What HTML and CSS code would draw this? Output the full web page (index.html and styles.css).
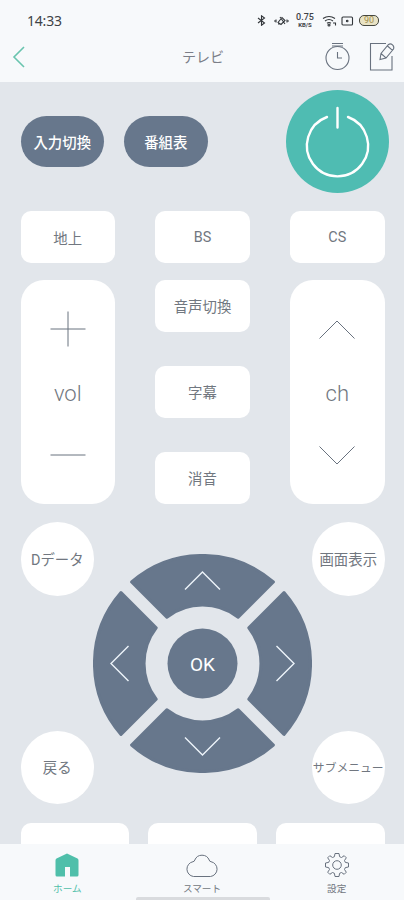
FILE: index.html
```html
<!DOCTYPE html>
<html lang="ja">
	<head>
		<title>テレビ</title><meta charset="utf-8">
		<link rel="stylesheet" href="styles.css">
	</head>
	<body>
		<div class="status">
			<span class="hora">14:33</span>
			<svg class="bt" width="9" height="11" viewBox="0 0 9 11"><path d="M1 3l6.5 5-3 2.3V.8l3 2.2L1 8"/></svg>
			<svg class="vibra" width="17" height="12" viewBox="0 0 17 12"><path d="M1 6h2M14 6h2M3 4.500v3M14 4.500v3M5 7.500l4-5 3 3-4 4zM7 2l5 7M5 9h3"/></svg>
			<span class="red"><b>0.75</b><small>KB/S</small></span>
			<svg class="wifi" width="15" height="12" viewBox="0 0 15 12"><path d="M1 3.500q6-4 12 0M3 6q4-3 8 0M5 8.300q2-1.500 4 0"/><circle cx="7" cy="10" r="1"/><path d="M11 8h2.500v2.500"/></svg>
			<svg class="caja" width="13" height="10" viewBox="0 0 13 10"><rect x="1" y="1" width="10.500" height="8" rx="1"/><circle cx="6.200" cy="5" r=".8"/></svg>
			<span class="bateria">90</span>
		</div>
		<div class="cabecera">
			<svg class="volver" width="14" height="22" viewBox="0 0 14 22"><path d="M12 1L2 11l10 10"/></svg>
			<h1>テレビ</h1>
			<svg class="reloj" width="26" height="29" viewBox="0 0 26 29"><path d="M8 1.500h11M8 4h11M13.500 10v6h4.500"/><circle cx="13.500" cy="16" r="11.500"/></svg>
			<svg class="nota" width="27" height="29" viewBox="0 0 27 29"><path d="M17 1.500H1.500V28H23V14"/><path d="M11 17.500l1-6 7.500-9q2-1.500 4 .3t1 4.200l-7.500 9zM12 11.500l5 4.300M18.500 4l5 4.300"/></svg>
		</div>
		<div class="mando">
			<div class="arriba">
				<div class="pildora">入力切換</div>
				<div class="pildora">番組表</div>
				<svg class="power" width="103" height="103" viewBox="0 0 103 103"><circle cx="51.500" cy="51.500" r="51.500"/><path d="M41 27a30.600 30.600 0 1 0 21 0M51.500 18v19.500"/></svg>
			</div>
			<div class="fila">
				<div class="tecla">地上</div>
				<div class="tecla">BS</div>
				<div class="tecla">CS</div>
			</div>
			<div class="fila centro">
				<div class="columna">
					<svg width="36" height="36" viewBox="0 0 36 36"><path d="M18 .5v35M.5 18h35"/></svg>
					<span>vol</span>
					<svg width="36" height="36" viewBox="0 0 36 36"><path d="M.5 18h35"/></svg>
				</div>
				<div class="medio">
					<div class="tecla">音声切換</div>
					<div class="tecla">字幕</div>
					<div class="tecla">消音</div>
				</div>
				<div class="columna">
					<svg width="36" height="36" viewBox="0 0 36 36"><path d="M.5 27.500L18 10l17.500 17.500"/></svg>
					<span>ch</span>
					<svg width="36" height="36" viewBox="0 0 36 36"><path d="M.5 9.500L18 27l17.500-17.500"/></svg>
				</div>
			</div>
			<div class="cruceta">
				<div class="lado">
					<div class="redondo">Dデータ</div>
					<div class="redondo">戻る</div>
				</div>
				<svg class="flechas" width="219" height="219" viewBox="-109.500 -109.500 219 219">
					<defs>
						<g id="sector">
							<path class="pieza" d="M-70.900-81.500A108 108 0 0 1 70.900-81.500L35.700-46.300A58.500 58.500 0 0 0-35.700-46.300z"/>
							<path class="punta" d="M-17.500-74L0-91.500 17.500-74"/>
						</g>
					</defs>
					<use href="#sector"/>
					<use href="#sector" transform="rotate(90)"/>
					<use href="#sector" transform="rotate(180)"/>
					<use href="#sector" transform="rotate(270)"/>
					<circle r="35"/>
					<text y="7" text-anchor="middle">OK</text>
				</svg>
				<div class="lado">
					<div class="redondo">画面表示</div>
					<div class="redondo largo">サブメニュー</div>
				</div>
			</div>
			<div class="fila ultima">
				<div class="tarjeta"></div>
				<div class="tarjeta"></div>
				<div class="tarjeta"></div>
			</div>
		</div>
		<div class="menu">
			<div class="opcion activa">
				<svg width="32" height="26" viewBox="0 0 32 26"><path d="M16 1.500l10.500 5q1 .6 1 2V23q0 1.500-1.500 1.500h-7V15h-5v9.500H6q-1.500 0-1.500-1.500V8.500q0-1.400 1-2z"/></svg>
				ホーム
			</div>
			<div class="opcion">
				<svg width="32" height="26" viewBox="0 0 32 26"><path d="M7.500 24.500a7.500 7.500 0 0 1-.5-14.800q1.500-.2 1.800-1.700a7.800 7.800 0 0 1 14.400 0q.3 1.500 1.800 1.700a7.500 7.500 0 0 1-.5 14.800z"/></svg>
				スマート
			</div>
			<div class="opcion">
				<svg width="26" height="26" viewBox="-13 -13 26 26"><path d="M-2-11.500h4l.6 3.200 1.900.8L7.200-9.300 9.300-7.200 7.500-4.500l.8 1.900 3.200.6v4l-3.200.6-.8 1.900 1.800 2.700-2.100 2.100-2.700-1.800-1.900.8L2 11.500h-4l-.6-3.200-1.900-.8-2.700 1.800-2.100-2.100 1.800-2.700-.8-1.900-3.200-.6v-4l3.200-.6.8-1.900-1.800-2.700 2.100-2.100 2.700 1.800 1.900-.8z"/><circle r="4.300"/></svg>
				設定
			</div>
			<div class="barra"></div>
		</div>
	</body>
</html>
```
FILE: styles.css
```css
* {box-sizing: border-box;}
body {margin: 0; width: 404px; height: 900px; overflow: hidden; display: flex; flex-direction: column; background-color: #F7F9FB; color: #717780; font-family: Roboto, "Noto Sans CJK JP", sans-serif; font-size: 14.4px;}
svg {display: block; flex: none; fill: none; stroke: #69727F; stroke-width: 1;}

/* barra de estado */
.status {height: 40px; padding: 1px 25px 0 27px; display: flex; align-items: center; color: #3E4247;}
.status svg {stroke: #33373B; stroke-width: 1.1;}
.hora {font-family: "Noto Sans", sans-serif; font-size: 14px; letter-spacing: -.2px; margin-right: auto;}
.vibra {margin-left: 7px;}
.red {width: 20px; margin: 0 7px 0 5px; display: flex; flex-direction: column; align-items: center;}
.red b {font-size: 9px; font-weight: 500; line-height: 9px;}
.red small {font-size: 6px; font-weight: bold; line-height: 6px;}
.caja {margin: 0 5px 0 4px;}
.bateria {width: 20px; height: 11px; border: 1px solid #45473F; border-radius: 5px; background-color: #E9E3C4; color: #A18F4F; font-size: 9px; line-height: 9px; text-align: center;}

/* cabecera */
.cabecera {height: 42px; padding: 0 8px 9px 12px; display: flex; align-items: center;}
.cabecera h1 {margin: -2px 0 0 156px; font-size: 14px; font-weight: normal; color: #7B7E88;}
.volver {stroke: #69C4AE; stroke-width: 1.6;}
.reloj {margin-left: auto;}
.nota {margin-left: 19px;}
.reloj, .nota {stroke-width: 1.1;}

.mando {height: 762px; padding: 8px 19.5px 0 20.5px; overflow: hidden; background-color: #E2E6EB;}
.arriba {height: 103px; margin-right: -4px; display: flex; align-items: center; gap: 20px;}
.pildora {width: 83.5px; height: 51.500px; border-radius: 26px; background-color: #67778C; color: white; font-weight: 500; display: flex; align-items: center; justify-content: center;}
.power {margin-left: auto; fill: #4FBCB2; stroke: none;}
.power path {fill: none; stroke: white; stroke-width: 2.4; stroke-linecap: round;}

.fila {display: flex; justify-content: space-between; margin-top: 18px;}
.tecla {width: 94.5px; height: 52px; border-radius: 10px; background-color: white; display: flex; align-items: center; justify-content: center;}
.centro {margin-top: 17px; height: 224px;}
.columna {width: 94.5px; border-radius: 23px; background-color: white; padding: 31px 0; display: flex; flex-direction: column; align-items: center; justify-content: space-between; font-size: 22px; font-weight: 300;}
.columna span {padding-top: 2px;}
.medio {display: flex; flex-direction: column; justify-content: space-between;}
.medio .tecla, .redondo {padding-bottom: 1px;}

/* cruceta */
.cruceta {margin-top: 18px; display: flex; justify-content: space-between;}
.lado {width: 72.5px; height: 282px; display: flex; flex-direction: column; justify-content: space-between;}
.redondo {width: 73.5px; height: 73.5px; border-radius: 50%; background-color: white; display: flex; align-items: center; justify-content: center; white-space: nowrap;}
.lado:last-child .redondo {margin-left: -.5px;}
.largo {font-size: 11.8px;}
.flechas {position: relative; margin: 31.5px 0 0; fill: #67778C; stroke: none;}
.pieza {stroke: #67778C; stroke-width: 3; stroke-linejoin: round;}
.punta {fill: none; stroke: #EDF4FA; stroke-width: 1.4;}
.flechas text {fill: white; font-size: 19px; font-weight: 400;}
.ultima {margin-top: 18.5px;}
.tarjeta {width: 108.5px; height: 52px; border-radius: 10px; background-color: white;}

/* menu inferior */
.menu {height: 56px; display: flex; padding-top: 8px; position: relative;}
.opcion {width: 135px; display: flex; flex-direction: column; align-items: center; font-size: 9.6px; line-height: 14px; gap: 4px;}
.activa {color: #4FBFAA;}
.activa svg {fill: #4FBFAA; stroke: none;}
.barra {position: absolute; left: 136px; bottom: 0; width: 134px; height: 3px; border-radius: 2px 2px 0 0; background-color: #D9DBDE;}
```
